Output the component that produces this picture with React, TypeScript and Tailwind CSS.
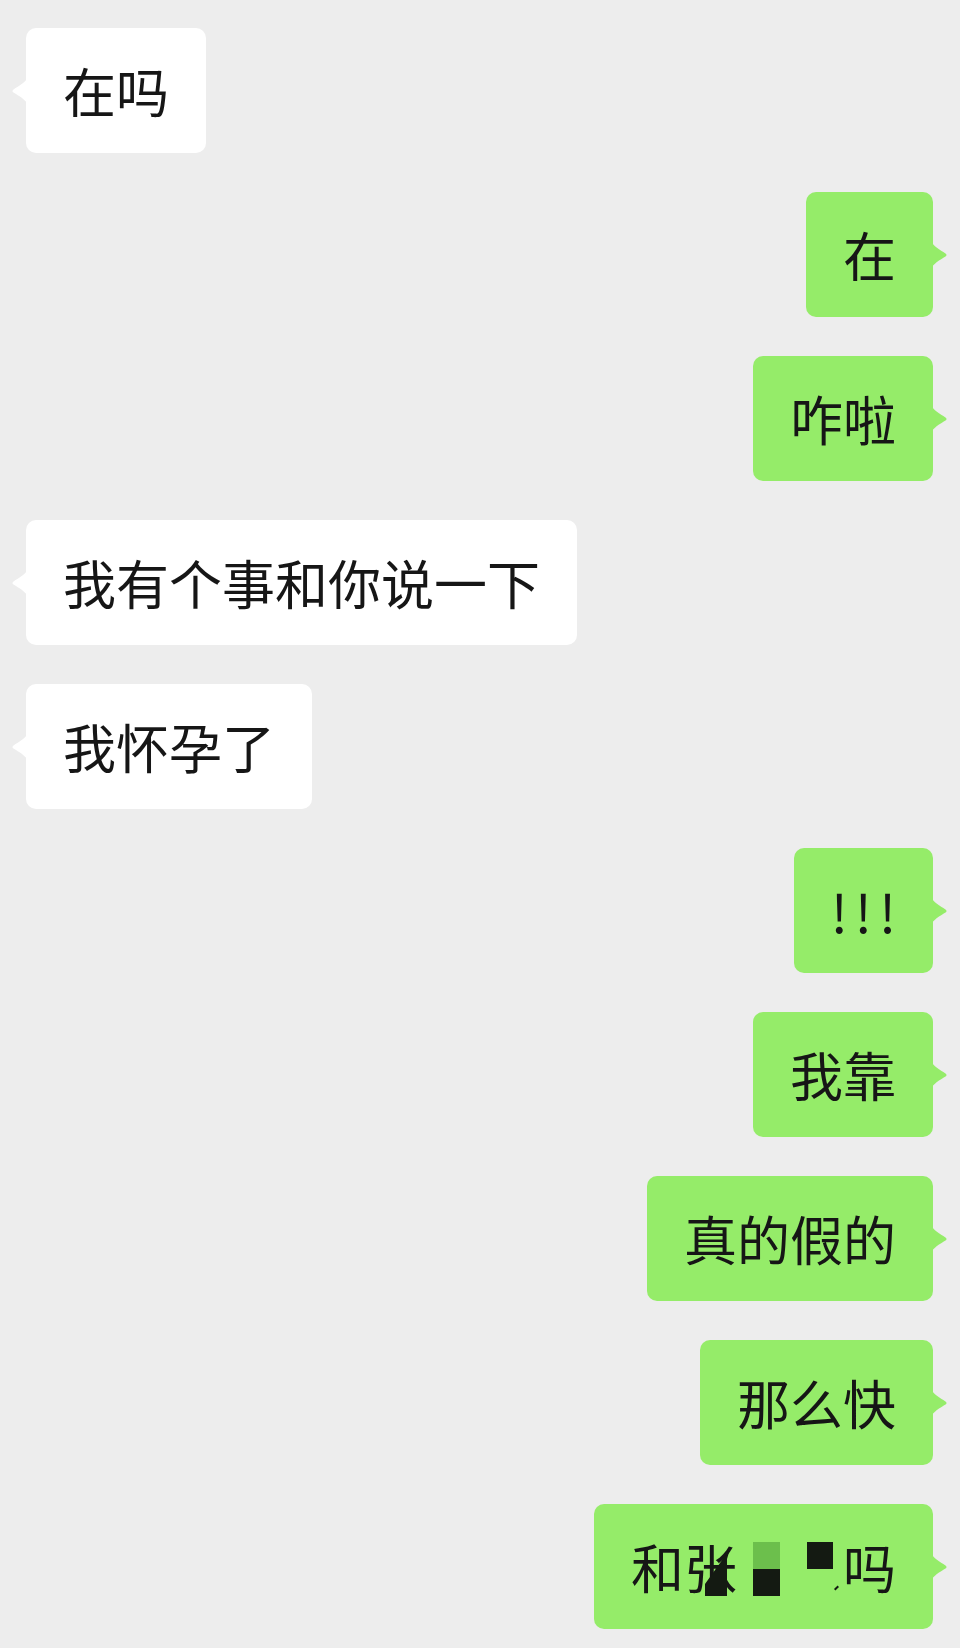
import type { ReactNode } from "react";

type Msg = { from: "them" | "me"; text?: string; node?: ReactNode };

const font = "font-['Noto_Sans_CJK_SC','Noto_Sans',sans-serif]";

function Tail({ side, color }: { side: "left" | "right"; color: string }) {
  // little pointer on the bubble's edge, vertically centered
  if (side === "left") {
    return (
      <svg
        width="17"
        height="28"
        viewBox="0 0 17 28"
        className="absolute left-[-15px] top-1/2 -translate-y-1/2"
      >
        <path d="M17 0 C15 5 8 9 2.5 12.4 Q0.5 14 2.5 15.6 C8 19 15 23 17 28 Z" fill={color} />
      </svg>
    );
  }
  return (
    <svg
      width="17"
      height="28"
      viewBox="0 0 17 28"
      className="absolute right-[-15px] top-1/2 -translate-y-1/2"
    >
      <path d="M0 0 C2 5 9 9 14.5 12.4 Q16.5 14 14.5 15.6 C9 19 2 23 0 28 Z" fill={color} />
    </svg>
  );
}

function Censored() {
  // "和张██吗" - the pixelated name in the last message
  return (
    <span className="relative inline-flex">
      <span>和张</span>
      <span className="inline-block w-[106px]" />
      <span>吗</span>
      <svg
        width="30"
        height="50"
        viewBox="0 0 30 50"
        className="absolute left-[72px] top-[7px]"
      >
        <path d="M27 2 L2 37 L2 49 L24 49 L24 12 Z" fill="#141a12" />
      </svg>
      <span className="absolute left-[122px] top-[2px] w-[27px] h-[27px] bg-[#6cbf4c]" />
      <span className="absolute left-[122px] top-[29px] w-[27px] h-[27px] bg-[#141a12]" />
      <span className="absolute left-[176px] top-[2px] w-[26px] h-[27px] bg-[#141a12]" />
      <span className="absolute left-[203px] top-[47px] w-[5px] h-[2px] bg-[#141a12] -rotate-45" />
    </span>
  );
}

const messages: Msg[] = [
  { from: "them", text: "在吗" },
  { from: "me", text: "在" },
  { from: "me", text: "咋啦" },
  { from: "them", text: "我有个事和你说一下" },
  { from: "them", text: "我怀孕了" },
  { from: "me", node: <span className="tracking-[7px] mr-[-7px]">!!!</span> },
  { from: "me", text: "我靠" },
  { from: "me", text: "真的假的" },
  { from: "me", text: "那么快" },
  { from: "me", node: <Censored /> },
];

function Bubble({ msg }: { msg: Msg }) {
  const mine = msg.from === "me";
  const color = mine ? "#95ec69" : "#ffffff";
  return (
    <div className={mine ? "flex justify-end" : "flex justify-start"}>
      <div
        className={`relative rounded-[10px] px-[37px] py-[36px] text-[53px] leading-[53px] text-[#161616] whitespace-nowrap ${
          mine ? "bg-[#95ec69]" : "bg-white"
        }`}
      >
        {msg.node ?? msg.text}
        <Tail side={mine ? "right" : "left"} color={color} />
      </div>
    </div>
  );
}

export default function App() {
  return (
    <div className={`min-h-screen bg-[#ededed] ${font}`}>
      <div className="flex flex-col gap-[39px] pl-[26px] pr-[27px] pt-[28px] pb-[18px]">
        {messages.map((m, i) => (
          <Bubble key={i} msg={m} />
        ))}
      </div>
    </div>
  );
}
